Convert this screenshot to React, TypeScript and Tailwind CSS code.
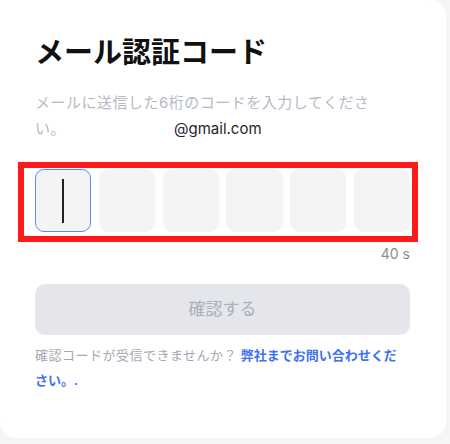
import { useState } from "react";

const font = 'font-["Inter","Noto_Sans_CJK_JP",sans-serif]';

function CodeBoxes() {
  const [digits] = useState(["", "", "", "", "", ""]);
  return (
    <div className="relative">
      {/* red annotation frame around the input row */}
      <div className="pointer-events-none absolute -left-[17px] -right-[8px] -top-[7px] -bottom-[10px] border-[6px] border-[#ff1a1a]" />
      <div className="grid grid-cols-6 gap-[7.5px]">
        {digits.map((d, i) => (
          <div
            key={i}
            className={[
              "flex h-[63px] items-center justify-center rounded-[9px] bg-[#f4f4f5]",
              i === 0 ? "border-[1.5px] border-[#5b8df0]" : "",
            ].join(" ")}
          >
            {i === 0 ? <span className="block h-[44px] w-[1.5px] bg-[#222]" /> : d}
          </div>
        ))}
      </div>
    </div>
  );
}

export default function App() {
  return (
    <div className={`h-[444px] w-[450px] overflow-hidden bg-[#f4f5f7] ${font}`}>
      <div className="h-[438px] w-[446px] rounded-r-2xl rounded-bl-2xl bg-white pl-[35px] pr-[36px] pt-[35px]">
        <h1 className="text-[29px] font-bold leading-[36px] text-[#111]">メール認証コード</h1>

        <p className="mt-[19px] text-[15px] leading-[26px] tracking-[0.5px] text-[#b5bac6]">
          メールに送信した6桁のコードを入力してくださ
          <br />
          い。
          <span className="ml-[108px] tracking-normal text-[#1f2430]">@gmail.com</span>
        </p>

        <div className="mt-[27px]">
          <CodeBoxes />
        </div>

        <div className="mt-[14px] text-right text-[14px] leading-[16px] text-[#8c8c8c]">40 s</div>

        <button
          type="button"
          disabled
          className="mt-[22px] flex h-[51px] w-full items-center justify-center rounded-[10px] bg-[#e5e6eb] text-[17px] text-[#a8aebb]"
        >
          確認する
        </button>

        <p className="mt-[8px] text-[13px] leading-[25px] text-[#a3a8b3]">
          <span className="tracking-[0.5px]">確認コードが受信できませんか？</span>{" "}
          <a href="#" className="font-semibold text-[#3d72f0]">
            弊社までお問い合わせくだ
            <br />
            さい。.
          </a>
        </p>
      </div>
    </div>
  );
}
